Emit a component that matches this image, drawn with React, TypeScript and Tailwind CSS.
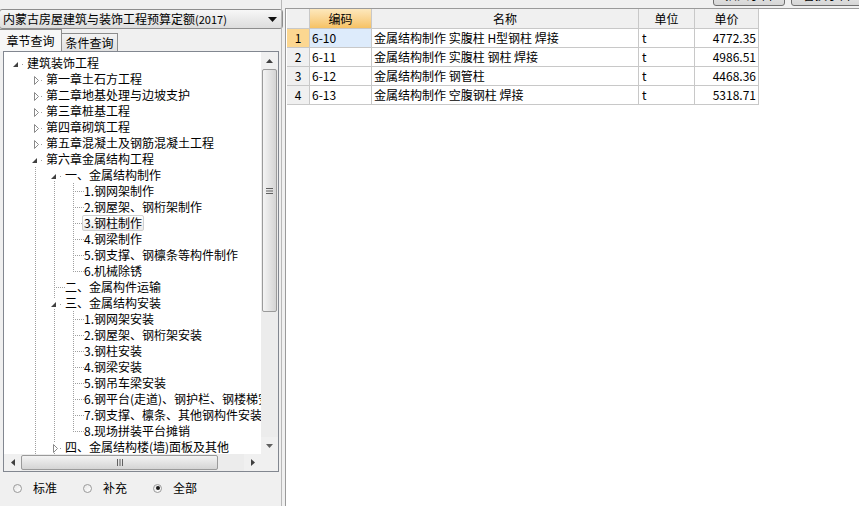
import React from "react";

type Kind = "open" | "closed" | "leaf";

interface TreeRow {
  level: number;
  text: string;
  kind: Kind;
  guides: number[];
  last?: boolean;
  hot?: boolean;
  up?: boolean;
  down?: boolean;
}

const tree: TreeRow[] = [
  { level: 0, text: "建筑装饰工程", kind: "open", guides: [] },
  { level: 1, text: "第一章土石方工程", kind: "closed", guides: [] },
  { level: 1, text: "第二章地基处理与边坡支护", kind: "closed", guides: [] },
  { level: 1, text: "第三章桩基工程", kind: "closed", guides: [] },
  { level: 1, text: "第四章砌筑工程", kind: "closed", guides: [] },
  { level: 1, text: "第五章混凝土及钢筋混凝土工程", kind: "closed", guides: [] },
  { level: 1, text: "第六章金属结构工程", kind: "open", guides: [], down: true },
  { level: 2, text: "一、金属结构制作", kind: "open", guides: [1], down: true },
  { level: 3, text: "1.钢网架制作", kind: "leaf", guides: [1, 2] },
  { level: 3, text: "2.钢屋架、钢桁架制作", kind: "leaf", guides: [1, 2] },
  { level: 3, text: "3.钢柱制作", kind: "leaf", guides: [1, 2], hot: true },
  { level: 3, text: "4.钢梁制作", kind: "leaf", guides: [1, 2] },
  { level: 3, text: "5.钢支撑、钢檩条等构件制作", kind: "leaf", guides: [1, 2] },
  { level: 3, text: "6.机械除锈", kind: "leaf", guides: [1, 2], last: true },
  { level: 2, text: "二、金属构件运输", kind: "leaf", guides: [1] },
  { level: 2, text: "三、金属结构安装", kind: "open", guides: [1], up: true, down: true },
  { level: 3, text: "1.钢网架安装", kind: "leaf", guides: [1, 2] },
  { level: 3, text: "2.钢屋架、钢桁架安装", kind: "leaf", guides: [1, 2] },
  { level: 3, text: "3.钢柱安装", kind: "leaf", guides: [1, 2] },
  { level: 3, text: "4.钢梁安装", kind: "leaf", guides: [1, 2] },
  { level: 3, text: "5.钢吊车梁安装", kind: "leaf", guides: [1, 2] },
  { level: 3, text: "6.钢平台(走道)、钢护栏、钢楼梯安装", kind: "leaf", guides: [1, 2] },
  { level: 3, text: "7.钢支撑、檩条、其他钢构件安装", kind: "leaf", guides: [1, 2] },
  { level: 3, text: "8.现场拼装平台摊销", kind: "leaf", guides: [1, 2], last: true },
  { level: 2, text: "四、金属结构楼(墙)面板及其他", kind: "closed", guides: [1], up: true, down: true },
];

const rows = [
  { no: "1", code: "6-10", name: "金属结构制作 实腹柱 H型钢柱 焊接", unit: "t", price: "4772.35" },
  { no: "2", code: "6-11", name: "金属结构制作 实腹柱 钢柱 焊接", unit: "t", price: "4986.51" },
  { no: "3", code: "6-12", name: "金属结构制作 钢管柱", unit: "t", price: "4468.36" },
  { no: "4", code: "6-13", name: "金属结构制作 空腹钢柱 焊接", unit: "t", price: "5318.71" },
];

const dots = "#a0a0a0";

function Guide({ on }: { on: boolean }) {
  return (
    <svg width="19" height="16" className="shrink-0">
      {on && <line x1="8.5" y1="0" x2="8.5" y2="16" stroke={dots} strokeDasharray="1 1" />}
    </svg>
  );
}

function Connector({ row }: { row: TreeRow }) {
  if (row.kind === "leaf") {
    return (
      <svg width="19" height="16" className="shrink-0">
        <line x1="8.5" y1="0" x2="8.5" y2={row.last ? 9 : 16} stroke={dots} strokeDasharray="1 1" />
        <line x1="10" y1="8.5" x2="19" y2="8.5" stroke={dots} strokeDasharray="1 1" />
      </svg>
    );
  }
  return (
    <svg width="19" height="16" className="shrink-0">
      {row.up && <line x1="8.5" y1="0" x2="8.5" y2="4" stroke={dots} strokeDasharray="1 1" />}
      {row.down && row.level > 1 && (
        <line x1="8.5" y1="14" x2="8.5" y2="16" stroke={dots} strokeDasharray="1 1" />
      )}
      {row.kind === "open" ? (
        <polygon points="10,7 10,12 5,12" fill="#404040" />
      ) : (
        <polygon points="7.5,5.5 7.5,13.5 11.5,9.5" fill="white" stroke="#8a8a8a" />
      )}
      <rect x="14" y="9" width="1" height="1" fill={dots} />
    </svg>
  );
}

function TreeLine({ row }: { row: TreeRow }) {
  const cols = Array.from({ length: row.level }, (_, i) => i);
  return (
    <div className="flex h-[16px] items-center whitespace-nowrap">
      {cols.map((c) => (
        <Guide key={c} on={row.guides.includes(c)} />
      ))}
      <Connector row={row} />
      {row.hot ? (
        <span className="-ml-[2px] h-[16px] rounded-[2px] border border-[#cfcfcf] bg-gradient-to-b from-white to-[#ebebeb] px-[1px] leading-[14px]">
          {row.text}
        </span>
      ) : (
        <span className="leading-[16px]">{row.text}</span>
      )}
    </div>
  );
}

function ArrowV({ dir }: { dir: "up" | "down" }) {
  return (
    <svg width="7" height="4">
      {dir === "up" ? (
        <polygon points="0,4 7,4 3.5,0" fill="#404040" />
      ) : (
        <polygon points="0,0 7,0 3.5,4" fill="#606060" />
      )}
    </svg>
  );
}

function ArrowH({ dir }: { dir: "left" | "right" }) {
  return (
    <svg width="4" height="7">
      {dir === "left" ? (
        <polygon points="4,0 4,7 0,3.5" fill="#404040" />
      ) : (
        <polygon points="0,0 0,7 4,3.5" fill="#404040" />
      )}
    </svg>
  );
}

function Radio({ label, checked }: { label: string; checked?: boolean }) {
  return (
    <div className="flex items-center">
      <div className="flex h-[9px] w-[9px] items-center justify-center rounded-full border border-[#9a9a9a] bg-gradient-to-br from-[#e6e6e6] to-white">
        {checked && <div className="h-[4px] w-[4px] rounded-full bg-[#1a1a1a]" />}
      </div>
      <span className="ml-[11px]">{label}</span>
    </div>
  );
}

function LeftPanel() {
  return (
    <div className="flex w-[281px] shrink-0 flex-col">
      <div className="h-[9px]" />

      {/* Quota library selector */}
      <div className="-ml-[1px] flex h-[20px] w-[284px] items-center rounded-[3px] border border-[#8d8d8d] bg-gradient-to-b from-[#f7f7f7] to-[#dddddd] pl-[3px]">
        <span className="whitespace-nowrap">内蒙古房屋建筑与装饰工程预算定额</span>
        <span className="text-[11px]">(2017)</span>
        <svg width="9" height="5" className="ml-auto mr-[5px]">
          <polygon points="0,0 9,0 4.5,5" fill="#111" />
        </svg>
      </div>

      {/* Tabs */}
      <div className="flex h-[22px] items-end">
        <div className="flex h-[22px] w-[62px] items-center justify-center border-r border-t border-[#8d8d8d] bg-[#f7f7f7]">
          章节查询
        </div>
        <div className="flex h-[18px] w-[56px] items-center justify-center border-r border-t border-[#8d8d8d] bg-gradient-to-b from-[#f3f3f3] to-[#e0e0e0]">
          条件查询
        </div>
      </div>

      {/* Tree */}
      <div className="ml-[3px] flex h-[421px] w-[276px] flex-col border border-[#828790] bg-white">
        <div className="flex flex-1 overflow-hidden">
          <div className="flex-1 overflow-hidden pl-[4px] pt-[3px]">
            {tree.map((r, i) => (
              <TreeLine key={i} row={r} />
            ))}
          </div>
          <div className="flex w-[17px] flex-col bg-[#ececec]">
            <div className="flex h-[17px] items-center justify-center bg-[#f0f0f0]">
              <ArrowV dir="up" />
            </div>
            <div className="mx-[1px] flex h-[243px] items-center justify-center rounded-[2px] border border-[#9a9a9a] bg-gradient-to-r from-[#f4f4f4] to-[#d4d4d4]">
              <svg width="7" height="6">
                <rect x="0" y="0" width="7" height="1" fill="#606060" />
                <rect x="0" y="2.5" width="7" height="1" fill="#606060" />
                <rect x="0" y="5" width="7" height="1" fill="#606060" />
              </svg>
            </div>
            <div className="flex-1" />
            <div className="flex h-[17px] items-center justify-center bg-[#f0f0f0]">
              <ArrowV dir="down" />
            </div>
          </div>
        </div>
        <div className="flex h-[17px]">
          <div className="flex flex-1 bg-[#ececec]">
            <div className="flex w-[17px] items-center justify-center bg-[#f0f0f0]">
              <ArrowH dir="left" />
            </div>
            <div className="my-[1px] flex w-[197px] items-center justify-center rounded-[2px] border border-[#9a9a9a] bg-gradient-to-b from-[#f4f4f4] to-[#d4d4d4]">
              <svg width="6" height="7">
                <rect x="0" y="0" width="1" height="7" fill="#606060" />
                <rect x="2.5" y="0" width="1" height="7" fill="#606060" />
                <rect x="5" y="0" width="1" height="7" fill="#606060" />
              </svg>
            </div>
            <div className="flex-1" />
            <div className="flex w-[17px] items-center justify-center bg-[#f0f0f0]">
              <ArrowH dir="right" />
            </div>
          </div>
          <div className="w-[17px] bg-[#f0f0f0]" />
        </div>
      </div>

      {/* Filter */}
      <div className="flex flex-1 items-center gap-[26px] pb-[2px] pl-[13px]">
        <Radio label="标准" />
        <Radio label="补充" />
        <Radio label="全部" checked />
      </div>
    </div>
  );
}

function RightPanel() {
  const cell = "flex h-full items-center border-b border-r border-[#c8c8c8]";
  return (
    <div className="flex flex-1 flex-col">
      <div className="flex h-[8px] gap-[6px] overflow-hidden pl-[428px]">
        <div className="-mt-[16px] flex h-[22px] w-[72px] shrink-0 items-center justify-center rounded-[3px] border border-[#707070] bg-gradient-to-b from-[#f2f2f2] to-[#d6d6d6]">
          插入子目
        </div>
        <div className="-mt-[16px] flex h-[22px] w-[72px] shrink-0 items-center justify-center rounded-[3px] border border-[#707070] bg-gradient-to-b from-[#f2f2f2] to-[#d6d6d6]">
          替换子目
        </div>
      </div>
      <div className="flex-1 border-l border-t border-[#9a9a9a] bg-white pl-[1px]">
        <div className="flex h-[20px]">
          <div className={`${cell} w-[23px] bg-[#f0f0f0]`} />
          <div className={`${cell} w-[62px] justify-center bg-gradient-to-b from-[#fde8bc] to-[#f6c264]`}>编码</div>
          <div className={`${cell} w-[267px] justify-center bg-[#f0f0f0]`}>名称</div>
          <div className={`${cell} w-[56px] justify-center bg-[#f0f0f0]`}>单位</div>
          <div className={`${cell} w-[64px] justify-center bg-[#f0f0f0]`}>单价</div>
        </div>
        {rows.map((r, i) => (
          <div key={r.no} className="flex h-[19px]">
            <div className={`${cell} w-[23px] justify-center ${i === 0 ? "bg-[#fcd791]" : "bg-[#f0f0f0]"}`}>{r.no}</div>
            <div className={`${cell} w-[62px] pl-[2px] ${i === 0 ? "bg-[#ddebfb]" : ""}`}>{r.code}</div>
            <div className={`${cell} w-[267px] whitespace-nowrap pl-[2px]`}>{r.name}</div>
            <div className={`${cell} w-[56px] pl-[3px]`}>{r.unit}</div>
            <div className={`${cell} w-[64px] justify-end pr-[2px]`}>{r.price}</div>
          </div>
        ))}
      </div>
    </div>
  );
}

export default function App() {
  return (
    <div className="flex h-[506px] w-[859px] overflow-hidden bg-[#f0f0f0] font-['Noto_Sans_CJK_SC',sans-serif] text-[12px] text-black">
      <LeftPanel />
      <div className="w-[4px] shrink-0 border-l border-[#b8b8b8]" />
      <RightPanel />
    </div>
  );
}
